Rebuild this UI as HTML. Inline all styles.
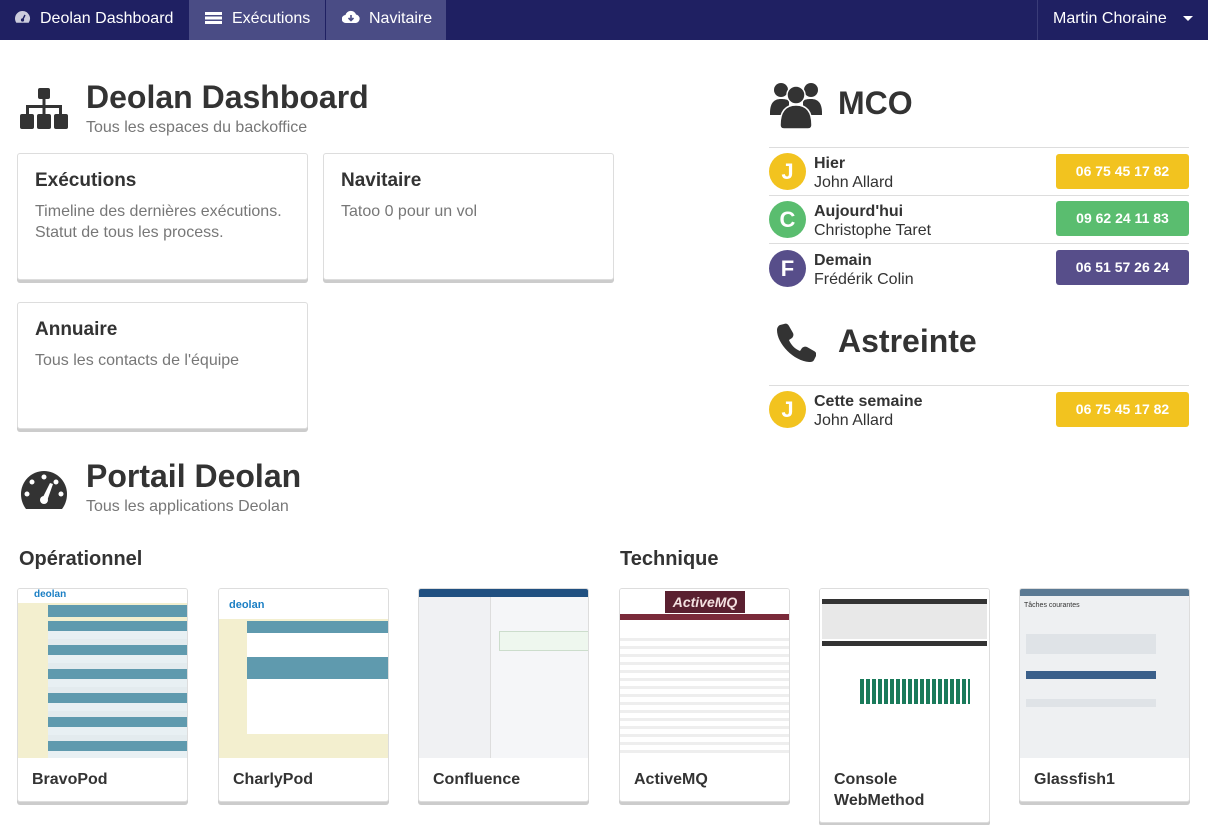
<!DOCTYPE html>
<html><head><meta charset="utf-8"><style>
*{box-sizing:border-box;margin:0;padding:0}
body{width:1208px;height:825px;overflow:hidden;font-family:"Liberation Sans",sans-serif;color:#333;background:#fff;position:relative}
.nav{position:absolute;left:0;top:0;width:1208px;height:40px;background:#1f2062}
.nav div{position:absolute;top:0;height:40px;line-height:37px;color:#fff;font-size:16px}
.abs{position:absolute}
h1{font-size:32px;font-weight:bold;color:#333}
.sub{font-size:16px;color:#777}
.card{position:absolute;border:1px solid #ddd;border-radius:3px;box-shadow:0 3px 0 #ccc;background:#fff}
.card h3{font-size:19px;font-weight:bold;margin:16px 0 0 17px}
.card p{font-size:16px;color:#777;margin:9px 0 0 17px;line-height:21px}
.row{position:absolute;left:769px;width:420px;border-top:1px solid #ddd}
.av{position:absolute;left:0;width:37px;height:37px;border-radius:50%;color:#fff;font-weight:bold;font-size:22px;text-align:center;line-height:37px}
.nm{position:absolute;left:45px;font-size:16px;line-height:19px}
.ph{position:absolute;left:287px;width:133px;height:35px;border-radius:3px;color:#fff;font-weight:bold;font-size:14px;text-align:center;line-height:35px}
.app{position:absolute;top:588px;width:171px;height:214px;border:1px solid #ddd;border-radius:3px;box-shadow:0 3px 0 #ccc;background:#fff;overflow:hidden}
.app .th{height:169px;position:relative;overflow:hidden}
.app .t{font-size:16px;font-weight:bold;margin:11px 0 0 14px;line-height:21px}
h2{position:absolute;font-size:20px;font-weight:bold}
</style></head><body>
<div class="nav">
<div style="left:0;width:189px;padding-left:14px"><svg width="17" height="14" viewBox="0 0 17 14" style="vertical-align:-1px;margin-right:9px"><path d="M8.5 1A7.5 7.5 0 0 0 1 8.5c0 1.6.5 3 1.3 4.2h12.4A7.5 7.5 0 0 0 8.5 1z" fill="#ccd"/><circle cx="8.5" cy="10" r="1.6" fill="#1f2062"/><path d="M8.5 10l2.5-5" stroke="#1f2062" stroke-width="1.4"/></svg>Deolan Dashboard</div>
<div style="left:189px;width:136px;background:#4a4c85;padding-left:16px"><span style="display:inline-block;width:17px;height:12px;margin-right:10px;vertical-align:-1px;background:repeating-linear-gradient(#fff 0 3px,#4a4c85 3px 4.5px)"></span>Exécutions</div>
<div style="left:326px;width:120px;background:#4a4c85;padding-left:16px"><svg width="18" height="14" viewBox="0 0 18 14" style="vertical-align:-1px;margin-right:9px"><path d="M4 13a4 4 0 0 1-.5-8A5.5 5.5 0 0 1 14 4.5 4.3 4.3 0 0 1 14 13z" fill="#fff"/><path d="M9 5v5M6.5 8l2.5 2.5L11.5 8" stroke="#4a4c85" stroke-width="1.6" fill="none"/></svg>Navitaire</div>
<div style="left:1037px;width:171px;border-left:1px solid #3a3c78;padding-left:15px">Martin Choraine <span style="display:inline-block;margin-left:12px;border:5px solid transparent;border-top-color:#fff;vertical-align:-3px"></span></div>
</div>

<svg class="abs" style="left:20px;top:88px" width="48" height="42" viewBox="0 0 48 42" fill="#333"><rect x="18" y="0" width="12" height="11" rx="2"/><rect x="22.5" y="10" width="3" height="10"/><rect x="6" y="17" width="36" height="3"/><rect x="6" y="17" width="3" height="10"/><rect x="39" y="17" width="3" height="10"/><rect x="22.5" y="17" width="3" height="10"/><rect x="0" y="26" width="14" height="15" rx="2"/><rect x="17" y="26" width="14" height="15" rx="2"/><rect x="34" y="26" width="14" height="15" rx="2"/></svg>
<h1 class="abs" style="left:86px;top:79px">Deolan Dashboard</h1>
<div class="abs sub" style="left:86px;top:119px">Tous les espaces du backoffice</div>

<div class="card" style="left:17px;top:153px;width:291px;height:127px"><h3>Exécutions</h3><p>Timeline des dernières exécutions.<br>Statut de tous les process.</p></div>
<div class="card" style="left:323px;top:153px;width:291px;height:127px"><h3>Navitaire</h3><p>Tatoo 0 pour un vol</p></div>
<div class="card" style="left:17px;top:302px;width:291px;height:127px"><h3>Annuaire</h3><p>Tous les contacts de l'équipe</p></div>

<svg class="abs" style="left:770px;top:81px" width="52" height="48" viewBox="0 0 52 48" fill="#333"><circle cx="11" cy="9" r="7"/><circle cx="41" cy="9" r="7"/><path d="M0 32c0-10 4-14 11-14s8 2 8 2v14H0z"/><path d="M52 32c0-10-4-14-11-14s-8 2-8 2v14h19z"/><circle cx="26" cy="14" r="9" stroke="#fff" stroke-width="1.5"/><path d="M10 44c0-13 5-20 16-20s16 7 16 20c0 3-2 4-4 4H14c-2 0-4-1-4-4z" stroke="#fff" stroke-width="1.5"/></svg>
<h1 class="abs" style="left:838px;top:85px">MCO</h1>

<div class="row" style="top:147px;height:48px"><div class="av" style="top:5px;background:#f2c31f">J</div><div class="nm" style="top:6px"><b>Hier</b><br>John Allard</div><div class="ph" style="top:6px;background:#f2c31f">06 75 45 17 82</div></div>
<div class="row" style="top:195px;height:48px"><div class="av" style="top:5px;background:#5abd6f">C</div><div class="nm" style="top:6px"><b>Aujourd'hui</b><br>Christophe Taret</div><div class="ph" style="top:5px;background:#5abd6f">09 62 24 11 83</div></div>
<div class="row" style="top:243px;height:48px"><div class="av" style="top:6px;background:#574e8a">F</div><div class="nm" style="top:7px"><b>Demain</b><br>Frédérik Colin</div><div class="ph" style="top:6px;background:#574e8a">06 51 57 26 24</div></div>

<svg class="abs" style="left:776px;top:322px" width="40" height="40" viewBox="0 0 40 40" fill="#333"><path d="M8 2c2-1 4 0 5 2l4 7c1 2 0 4-1 5l-3 2c2 5 6 9 11 11l2-3c1-1 3-2 5-1l7 4c2 1 3 3 2 5l-2 4c-1 2-3 2-5 2C18 39 1 22 1 8c0-2 1-4 3-5z"/></svg>
<h1 class="abs" style="left:838px;top:323px">Astreinte</h1>
<div class="row" style="top:385px;height:48px"><div class="av" style="top:5px;background:#f2c31f">J</div><div class="nm" style="top:6px"><b>Cette semaine</b><br>John Allard</div><div class="ph" style="top:6px;background:#f2c31f">06 75 45 17 82</div></div>

<svg class="abs" style="left:20px;top:470px" width="48" height="40" viewBox="0 0 48 40" fill="#333"><path d="M24 1A23 23 0 0 0 1 24c0 6 2 11 5 15h36c3-4 5-9 5-15A23 23 0 0 0 24 1z"/><g fill="#fff"><circle cx="24" cy="7" r="2.5"/><circle cx="12" cy="12" r="2.5"/><circle cx="7" cy="24" r="2.5"/><circle cx="41" cy="24" r="2.5"/><circle cx="36" cy="12" r="2.5"/><circle cx="24" cy="30" r="4"/><path d="M22 29l8-16 3 1-6 17z"/></g></svg>
<h1 class="abs" style="left:86px;top:458px">Portail Deolan</h1>
<div class="abs sub" style="left:86px;top:498px">Tous les applications Deolan</div>

<h2 style="left:19px;top:548px">Opérationnel</h2>
<h2 style="left:620px;top:548px">Technique</h2>

<div class="app" style="left:17px"><div class="th" style="background:#f3efcf"><div style="height:14px;background:#fff;color:#1b7fc4;font-size:10px;font-weight:bold;padding-left:16px">deolan</div><div style="position:absolute;left:30px;top:16px;right:0;height:12px;background:#5f9aae"></div><div style="position:absolute;left:30px;top:32px;right:0;height:137px;background:repeating-linear-gradient(#5f9aae 0 10px,#e8f0f3 10px 18px,#e3ebee 18px 24px)"></div></div><div class="t">BravoPod</div></div>
<div class="app" style="left:218px"><div class="th" style="background:#f3efcf"><div style="height:30px;background:#fff;color:#1b7fc4;font-size:11px;font-weight:bold;padding:10px 0 0 10px">deolan</div><div style="position:absolute;left:28px;top:32px;right:0;height:12px;background:#5f9aae"></div><div style="position:absolute;left:28px;top:44px;right:0;height:24px;background:#fff"></div><div style="position:absolute;left:28px;top:68px;right:0;height:22px;background:#5f9aae"></div><div style="position:absolute;left:28px;top:90px;right:0;height:55px;background:#fff"></div></div><div class="t">CharlyPod</div></div>
<div class="app" style="left:418px"><div class="th" style="background:#f5f6f8"><div style="height:8px;background:#205081"></div><div style="position:absolute;left:0;top:8px;width:72px;bottom:0;background:#f0f1f3;border-right:1px solid #ddd"></div><div style="position:absolute;left:80px;top:42px;width:90px;height:20px;background:#eef7ee;border:1px solid #cdc"></div></div><div class="t">Confluence</div></div>
<div class="app" style="left:619px"><div class="th" style="background:#fff"><div style="position:absolute;left:45px;top:2px;width:80px;height:22px;background:#5a2030;color:#f3e0e0;font:bold italic 14px 'Liberation Sans',sans-serif;text-align:center;line-height:22px">ActiveMQ</div><div style="position:absolute;left:0;top:25px;right:0;height:6px;background:#7a2a3a"></div><div style="position:absolute;left:0;top:44px;right:0;height:125px;background:repeating-linear-gradient(#fff 0 5px,#eee 5px 8px)"></div></div><div class="t">ActiveMQ</div></div>
<div class="app" style="left:819px;height:235px"><div class="th" style="background:#fff"><div style="position:absolute;left:2px;top:10px;right:2px;height:40px;background:#e8e8e8;border-top:5px solid #333"></div><div style="position:absolute;left:2px;top:52px;right:2px;height:5px;background:#333"></div><div style="position:absolute;left:40px;top:90px;width:110px;height:25px;background:repeating-linear-gradient(90deg,#1a7a5a 0 4px,#fff 4px 6px)"></div></div><div class="t">Console<br>WebMethod</div></div>
<div class="app" style="left:1019px"><div class="th" style="background:#eef0f2"><div style="height:7px;background:#5b7a94"></div><div style="font-size:7px;padding:6px 4px">Tâches courantes</div><div style="position:absolute;left:6px;top:45px;width:130px;height:20px;background:#dfe3e7"></div><div style="position:absolute;left:6px;top:82px;width:130px;height:8px;background:#3a5f8a"></div><div style="position:absolute;left:6px;top:110px;width:130px;height:8px;background:#dfe3e7"></div></div><div class="t">Glassfish1</div></div>
</body></html>
